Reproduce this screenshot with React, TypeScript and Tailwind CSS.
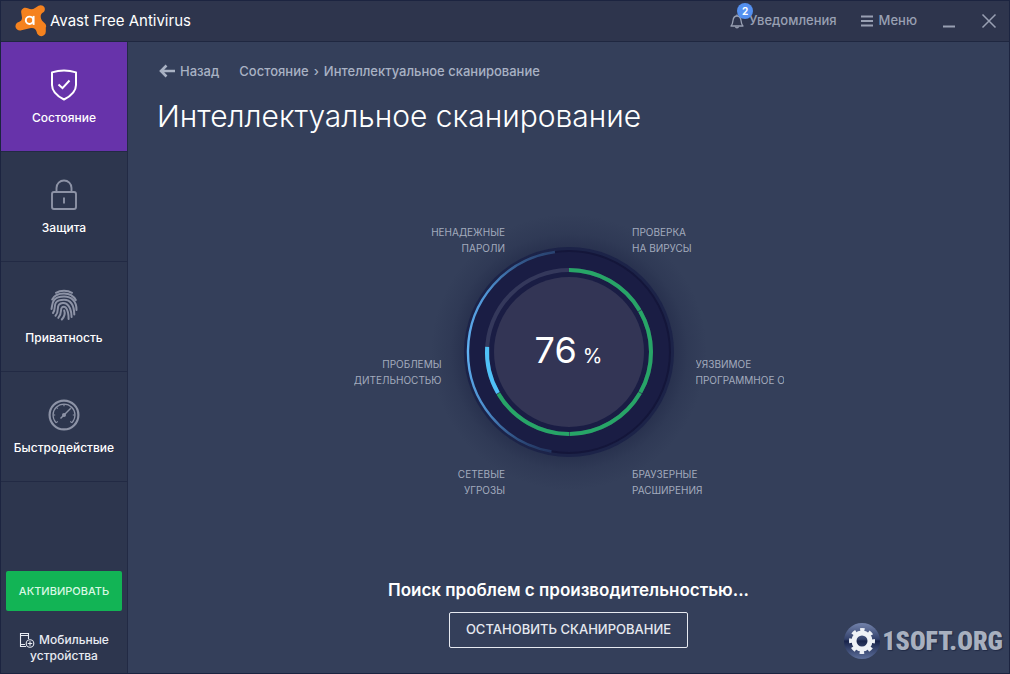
import type { ReactNode } from 'react';

// ── Icons ───────────────────────────────────────────────────────────────

function AvastLogo() {
  return (
    <svg className="h-8 w-8 shrink-0" viewBox="0 0 32 32" aria-hidden="true">
      <path
        fill="#f5821f"
        d="M8.4 3.2C10 2.3 12 2.9 13.400 3.600C15.500 4.700 18 4.600 20 3L23.500.8C25.600-.5 28.300.2 29.400 2.300C30.400 4.300 29.700 6.400 28 7.500C25.600 9 25.200 11.500 26.200 14C27 16 28.700 17.300 30 18.600C31.300 20 31.400 21.400 30.800 22.600V26.600C30.800 29.500 28.700 31.300 26.200 31.200C23.600 31.100 22 29.200 21.600 26.800C21 24 19 22.600 16 23L6.400 25.200C3.800 26 1.200 24.600 .6 22.200C0 19.700 1.600 17.700 3.800 17C6.400 16.200 7.300 14.400 6.900 12L6.200 7.400C5.900 5.700 6.800 4.100 8.400 3.200Z"
      />
      <circle cx="14.500" cy="15.300" r="3.700" fill="none" stroke="#fff" strokeWidth="1.900" />
      <path d="M18.600 10.900V19.900" stroke="#fff" strokeWidth="1.900" />
    </svg>
  );
}

function ShieldIcon() {
  return (
    <svg className="h-8 w-8" viewBox="0 0 32 32" fill="none" stroke="currentColor" strokeWidth="2" strokeLinejoin="round">
      <path d="M16 1.500C19.500 1.500 24 2.100 28 3.400V16C28 23.500 22 27.500 16 30.500C10 27.500 4 23.500 4 16V3.400C8 2.100 12.500 1.500 16 1.500Z" />
      <path d="M10.500 15.500L14.500 19.200L21.500 11.500" strokeLinejoin="miter" />
    </svg>
  );
}

function LockIcon() {
  return (
    <svg className="h-8 w-8" viewBox="0 0 32 32" fill="none" stroke="currentColor" strokeWidth="1.900">
      <rect x="4" y="13" width="24" height="17" rx="2" />
      <path d="M8.500 13V9A7.500 7.500 0 0 1 23.500 9V13" />
      <path d="M16 18.500V24.500" />
    </svg>
  );
}

function FingerprintIcon() {
  return (
    <svg className="h-8 w-7" viewBox="0 0 28 32" fill="none" stroke="currentColor" strokeWidth="2" strokeLinecap="round">
      <path d="M6 3.800C10.500 1 17.500 1 22 3.800" />
      <path d="M2.200 10.500C4 6.500 8.500 4.400 14 4.400C19 4.400 23.500 6.700 25.800 11" />
      <path d="M1.500 20C2.500 16.500.8 7.600 14 7.600C21.500 7.600 26.700 12 26.500 21" />
      <path d="M3 24C6 20.500 3.500 17 6 13.500C8 11 11 10.800 14 10.800C20 10.800 24 15 24.300 25.500" />
      <path d="M5.500 26.800C9.500 22.500 6.500 18.500 9 15.700C11 13.500 14.500 13.600 16.500 14.800C20.500 17.500 21.500 22 21.600 28" />
      <path d="M8.300 28.900C12.500 24.500 10 20.500 11.800 18.600C13 17.200 15 17.400 16 18.900C18 21.500 18.600 25 18.600 30" />
      <path d="M11.800 30.500C14.500 27.500 15.400 24.500 14.200 21.500" />
    </svg>
  );
}

function GaugeIcon() {
  return (
    <svg className="h-8 w-8" viewBox="0 0 32 32" fill="none" stroke="currentColor">
      <circle cx="16" cy="16" r="14.400" strokeWidth="2.200" />
      <path d="M8.200 23.800A11 11 0 1 1 23.800 23.800" strokeWidth="1.200" />
      <path
        d="M5 16H7.200M8.200 8.200L9.700 9.700M16 5V7.200M23.800 8.200L22.300 9.700M27 16H24.800M23.800 23.800L22.300 22.300M8.200 23.800L9.700 22.300"
        strokeWidth="1.200"
      />
      <path d="M12.500 19.500L22.500 9.500" strokeWidth="1.500" />
      <circle cx="16" cy="16" r="2" fill="currentColor" stroke="none" />
    </svg>
  );
}

function BellIcon() {
  return (
    <svg className="h-4 w-4" viewBox="0 0 16 16" fill="none" stroke="currentColor" strokeWidth="1.300" strokeLinejoin="round">
      <path d="M2 13H14C12.500 11.800 12.300 10 12 7.500C11.700 4.800 10.500 3 8 3C5.500 3 4.300 4.800 4 7.500C3.700 10 3.500 11.800 2 13Z" />
      <path d="M8 3V1.500M6.500 13.500C6.700 15.300 9.300 15.300 9.500 13.500" />
    </svg>
  );
}

function MobileIcon() {
  return (
    <svg className="h-4 w-4 shrink-0" viewBox="0 0 16 16" fill="none" stroke="currentColor" strokeWidth="1.100">
      <path d="M7 14.500H1.500V1.500H9.500V7M1.500 3.500H9.500M1.500 12.500H6" />
      <circle cx="11" cy="11.500" r="3.800" />
      <path d="M11 9.300V13.700M8.800 11.500H13.200" />
    </svg>
  );
}

// ── Scan dial ───────────────────────────────────────────────────────────

const CENTER = 140;

function arc(radius: number, from: number, to: number): string {
  const point = (deg: number) => {
    const rad = ((deg - 90) * Math.PI) / 180;
    return `${(CENTER + radius * Math.cos(rad)).toFixed(2)} ${(CENTER + radius * Math.sin(rad)).toFixed(2)}`;
  };
  return `M${point(from)}A${radius} ${radius} 0 ${to - from > 180 ? 1 : 0} 1 ${point(to)}`;
}

const doneSegments = [0, 60, 120, 180];

function Dial({ percent }: { percent: number }) {
  return (
    <div className="grid place-items-center">
      <svg className="col-start-1 row-start-1 h-[280px] w-[280px]" viewBox="0 0 280 280" aria-hidden="true">
        <defs>
          <radialGradient id="halo">
            <stop offset="0.74" stopColor="#222a48" stopOpacity="0.7" />
            <stop offset="0.86" stopColor="#222a48" stopOpacity="0.25" />
            <stop offset="1" stopColor="#222a48" stopOpacity="0" />
          </radialGradient>
          <linearGradient id="sweep" x1="0" y1="0" x2="0" y2="1">
            <stop offset="0" stopColor="#5aa9ee" stopOpacity="0.3" />
            <stop offset="0.2" stopColor="#5aa9ee" stopOpacity="0.85" />
            <stop offset="0.5" stopColor="#62b4f5" />
            <stop offset="0.8" stopColor="#5aa9ee" stopOpacity="0.8" />
            <stop offset="1" stopColor="#5aa9ee" stopOpacity="0.2" />
          </linearGradient>
        </defs>
        <circle cx={CENTER} cy={CENTER} r="138" fill="url(#halo)" />
        <circle cx={CENTER} cy={CENTER} r="105" fill="#1c2348" />
        <circle cx={CENTER} cy={CENTER} r="101" fill="#1a1d44" stroke="#14163a" strokeWidth="2" />
        <circle cx={CENTER} cy={CENTER} r="82" fill="none" stroke="#34385b" strokeWidth="4" />
        <circle cx={CENTER} cy={CENTER} r="75" fill="#333555" />
        <path d={arc(101, 190, 352)} fill="none" stroke="url(#sweep)" strokeWidth="2.400" />
        {doneSegments.map(start => (
          <path key={start} d={arc(82, start, start + 59.5)} fill="none" stroke="#27a567" strokeWidth="4" />
        ))}
        <path d={arc(82, 240, percent * 3.6)} fill="none" stroke="#4fc1f7" strokeWidth="4" />
      </svg>
      <p className="col-start-1 row-start-1 flex items-baseline gap-1.5 pb-1 text-white">
        <span className="text-4xl">{percent}</span>
        <span className="text-xl">%</span>
      </p>
    </div>
  );
}

function StageLabel({ lines, side }: { lines: string[]; side: 'left' | 'right' }) {
  return (
    <div
      className={`flex min-w-0 flex-1 flex-col overflow-hidden whitespace-nowrap ${side === 'left' ? 'items-end' : 'items-start'}`}
    >
      {lines.map(line => (
        <span key={line}>{line}</span>
      ))}
    </div>
  );
}

// ── Sidebar ─────────────────────────────────────────────────────────────

const navItems: { label: string; icon: ReactNode; active?: boolean }[] = [
  { label: 'Состояние', icon: <ShieldIcon />, active: true },
  { label: 'Защита', icon: <LockIcon /> },
  { label: 'Приватность', icon: <FingerprintIcon /> },
  { label: 'Быстродействие', icon: <GaugeIcon /> },
];

function Sidebar() {
  return (
    <aside className="flex w-[127px] shrink-0 flex-col border-r border-[#222a44] bg-[#2d364e]">
      <nav>
        {navItems.map(item => (
          <a
            key={item.label}
            href="#"
            className={`flex h-[110px] flex-col items-center gap-[7px] border-b border-[#222a44] pt-[27px] text-xs leading-5 font-medium text-white ${item.active ? 'bg-[#6733aa]' : ''}`}
          >
            <span className={item.active ? 'text-white' : 'text-[#8d93a6]'}>{item.icon}</span>
            {item.label}
          </a>
        ))}
      </nav>
      <div className="mt-auto flex flex-col gap-[21px] px-[5px] pb-[9px]">
        <button className="h-10 rounded-xs bg-[#12b455] text-[11px] font-medium text-[#d9f8e4]">АКТИВИРОВАТЬ</button>
        <a href="#" className="text-center text-xs leading-4 font-medium text-[#e8ebf2]">
          <span className="flex items-center justify-center gap-1">
            <MobileIcon />
            Мобильные
          </span>
          устройства
        </a>
      </div>
    </aside>
  );
}

// ── Title bar ───────────────────────────────────────────────────────────

function TitleBar() {
  return (
    <header className="flex h-[41px] shrink-0 items-center border-b border-[#1f2740] bg-[#2e354d] pr-3 pl-3.5 text-[#99a0b3]">
      <AvastLogo />
      <span className="ml-[3px] text-[15px] text-white">Avast Free Antivirus</span>
      <div className="ml-auto flex items-center text-[13px] font-medium">
        <button className="relative flex items-center gap-1">
          <BellIcon />
          Уведомления
          <span className="absolute -top-2 left-2 flex h-4 w-4 items-center justify-center rounded-full bg-[#5490f0] text-[10px] font-bold text-white">
            2
          </span>
        </button>
        <button className="ml-6 flex items-center gap-1.5">
          <svg className="h-3 w-3" viewBox="0 0 12 12" stroke="currentColor" strokeWidth="2">
            <path d="M0 1.500H12M0 6H12M0 10.500H12" />
          </svg>
          Меню
        </button>
        <button className="ml-6" aria-label="Свернуть">
          <svg className="h-4 w-4" viewBox="0 0 16 16" stroke="currentColor" strokeWidth="2">
            <path d="M2 13.500H14" />
          </svg>
        </button>
        <button className="ml-6" aria-label="Закрыть">
          <svg className="h-4 w-4" viewBox="0 0 16 16" stroke="currentColor" strokeWidth="1.500">
            <path d="M1.500 1.500L14.500 14.500M14.500 1.500L1.500 14.500" />
          </svg>
        </button>
      </div>
    </header>
  );
}

function Watermark() {
  return (
    <div className="absolute right-1.5 bottom-3 flex items-center">
      <svg className="h-10 w-10" viewBox="0 0 40 40" aria-hidden="true">
        <defs>
          <linearGradient id="orb" x1="0" y1="0" x2="0" y2="1">
            <stop offset="0" stopColor="#7383ac" />
            <stop offset="0.45" stopColor="#33416b" />
            <stop offset="0.5" stopColor="#18234a" />
            <stop offset="1" stopColor="#5d6f9b" />
          </linearGradient>
        </defs>
        <circle cx="20" cy="20" r="18" fill="url(#orb)" />
        <circle cx="20" cy="20" r="8" fill="none" stroke="#eef1f6" strokeWidth="5" />
        <circle cx="20" cy="20" r="11" fill="none" stroke="#eef1f6" strokeWidth="4" strokeDasharray="4.320 4.320" strokeDashoffset="2.160" />
      </svg>
      <span className="font-['Impact','Roboto_Condensed','Open_Sans_Condensed','Roboto',sans-serif] text-[26px] leading-10 font-black text-[#a8b0bf] text-shadow-[1px_1px_1px_#202a45]">
        1SOFT.ORG
      </span>
    </div>
  );
}

export default function App() {
  return (
    <div className="flex min-h-screen flex-col border border-[#1c2440] bg-[#343f5a] font-['Inter',sans-serif]">
      <TitleBar />
      <div className="flex flex-1">
        <Sidebar />
        <main className="relative flex min-w-0 flex-1 flex-col pt-5 pb-[25px]">
          <div className="px-7">
            <nav className="flex items-center text-[13px] leading-[18px] font-medium text-[#a9b2c4]">
              <a href="#" className="flex items-center gap-[5px] pl-[3px]">
                <svg className="h-4 w-4" viewBox="0 0 16 16" fill="none" stroke="currentColor" strokeWidth="2.600">
                  <path d="M16 8H2.500M7.500 2.500L2 8L7.500 13.500" />
                </svg>
                Назад
              </a>
              <a href="#" className="ml-5">Состояние</a>
              <span className="mx-[5px]">›</span>
              <span>Интеллектуальное сканирование</span>
            </nav>
            <h1 className="mt-4 pl-px text-3xl leading-10 font-light text-white">Интеллектуальное сканирование</h1>
          </div>

          <section className="mt-[70px] mb-auto grid place-items-center">
            <div className="col-start-1 row-start-1">
              <Dial percent={76} />
            </div>
            <div className="col-start-1 row-start-1 flex w-[430px] flex-col pt-[18px] text-[10px] leading-4 text-[#a3abbd]">
              <div className="flex gap-[127px]">
                <StageLabel side="left" lines={['НЕНАДЕЖНЫЕ', 'ПАРОЛИ']} />
                <StageLabel side="right" lines={['ПРОВЕРКА', 'НА ВИРУСЫ']} />
              </div>
              <div className="mt-25 flex gap-[254px]">
                <StageLabel side="left" lines={['ПРОБЛЕМЫ', 'С ПРОИЗВОДИТЕЛЬНОСТЬЮ']} />
                <StageLabel side="right" lines={['УЯЗВИМОЕ', 'ПРОГРАММНОЕ ОБЕСПЕЧЕНИЕ']} />
              </div>
              <div className="mt-[78px] flex gap-[127px]">
                <StageLabel side="left" lines={['СЕТЕВЫЕ', 'УГРОЗЫ']} />
                <StageLabel side="right" lines={['БРАУЗЕРНЫЕ', 'РАСШИРЕНИЯ']} />
              </div>
            </div>
          </section>

          <div className="flex flex-col items-center gap-3">
            <p className="text-[17px] leading-5 font-semibold text-white">Поиск проблем с производительностью...</p>
            <button className="h-9 rounded-xs border border-[#e6e9f0] px-4 text-[13px] font-medium text-[#e6e9f0]">
              ОСТАНОВИТЬ СКАНИРОВАНИЕ
            </button>
          </div>
          <Watermark />
        </main>
      </div>
    </div>
  );
}
